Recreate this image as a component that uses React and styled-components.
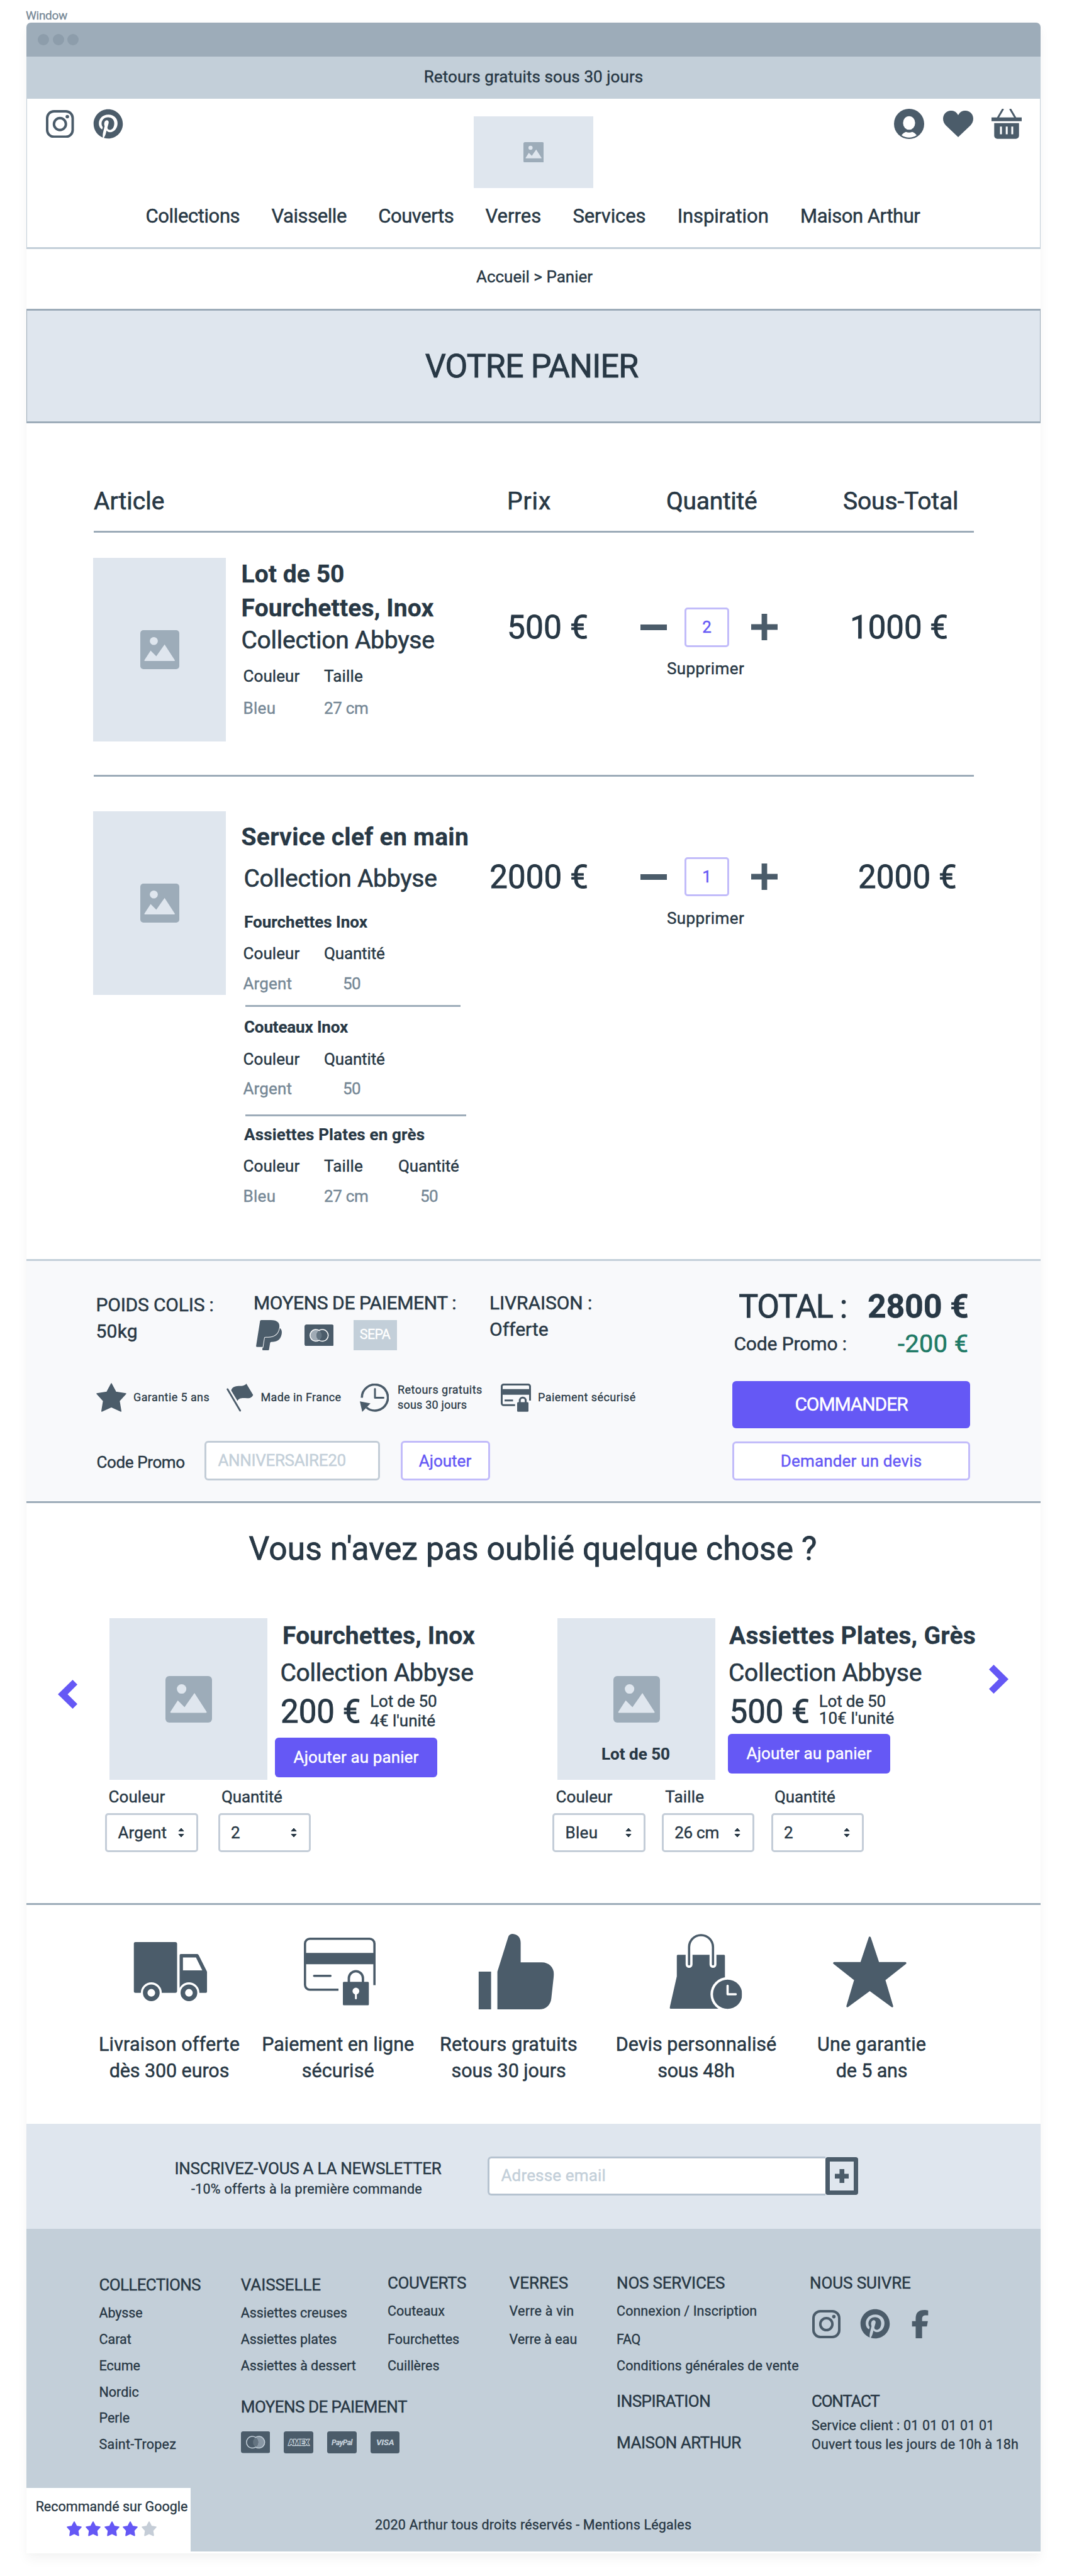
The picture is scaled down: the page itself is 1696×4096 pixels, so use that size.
import React from "react";
import styled, { createGlobalStyle, css } from "styled-components";
import { FaPinterest, FaFacebookF } from "react-icons/fa6";

const c = {
  ink: "#283845",
  icon: "#4b5c6a",
  muted: "#768896",
  steel: "#9dacb9",
  mist: "#c3cfd9",
  cloud: "#dfe6ee",
  pale: "#f8f9fb",
  violet: "#6558f5",
  lilac: "#c2bcfa",
  green: "#1f7a66",
};

const GlobalStyle = createGlobalStyle`
  *, *::before, *::after { box-sizing: border-box; }
  body {
    margin: 0;
    background: #ffffff;
    color: ${c.ink};
    font-family: Roboto, "Liberation Sans", sans-serif;
    font-weight: 400;
  }
  svg { display: block; flex: none; }
`;

/* ---------- text ---------- */

const Text = styled.div`
  font-size: ${(p) => p.$size || 26}px;
  line-height: ${(p) => p.$lh || 30}px;
  letter-spacing: ${(p) => p.$ls || 0}px;
  color: ${(p) => p.$color || "inherit"};
  -webkit-text-stroke: 0.016em currentColor;
  white-space: nowrap;
`;
const Strong = styled(Text)`
  font-weight: 700;
  -webkit-text-stroke: 0.008em currentColor;
`;

/* ---------- icons ---------- */

const Instagram = ({ size = 45 }) => (
  <svg width={size} height={size} viewBox="0 0 45 45" fill="none" stroke={c.icon} strokeWidth="4">
    <rect x="2" y="2" width="41" height="41" rx="11" />
    <circle cx="22.5" cy="22.5" r="9.6" />
    <circle cx="34.4" cy="10.6" r="2.8" fill={c.icon} stroke="none" />
  </svg>
);
const User = () => (
  <svg width="48" height="48" viewBox="0 0 48 48">
    <circle cx="24" cy="24" r="24" fill={c.icon} />
    <ellipse cx="24" cy="22.5" rx="9.6" ry="10.8" fill="#fff" />
    <path d="M12 42c2.500-2.600 4.500-4.700 7-5.200 3 1.200 7 1.200 10 0 2.500.5 4.500 2.600 7 5.200-7 5-17 5-24 0z" fill="#fff" />
  </svg>
);
const Heart = () => (
  <svg width="48" height="42" viewBox="0 0 48 42">
    <path
      d="M24 42 4.500 23.500C-.5 18.500-1.500 10.500 2.500 5 7-1.300 16.500-1.600 21.500 3.500L24 7l2.500-3.500C31.500-1.600 41-1.300 45.500 5c4 5.500 3 13.500-2 18.500z"
      fill={c.icon}
    />
  </svg>
);
const Basket = () => (
  <svg width="48" height="48" viewBox="0 0 48 48" fill={c.icon}>
    <path d="M18.500 0 10 14.500M29.500 0 38 14.500" stroke={c.icon} strokeWidth="3" />
    <rect y="13.700" width="48" height="6" />
    <path d="M4.300 22.800h39.400v20a5 5 0 0 1-5 5H9.300a5 5 0 0 1-5-5z" />
    <path d="M15 28.200v12.400M24.200 28.200v12.400M33 28.200v12.400" stroke="#fff" strokeWidth="3" />
  </svg>
);
const Picture = ({ size }) => (
  <svg width={size} height={size} viewBox="0 0 100 100">
    <rect width="100" height="100" rx="8" fill={c.steel} />
    <g fill={c.cloud}>
      <circle cx="34.700" cy="27.800" r="10.200" />
      <path d="M10.500 77 26.500 52.500 41 66.800 62.300 36.500 88.500 77q.5 2-1.500 2H12q-2 0-1.500-2z" />
    </g>
  </svg>
);
const Paypal = () => (
  <svg width="41" height="48" viewBox="1.800 0 20.400 24" preserveAspectRatio="none" fill={c.icon}>
    <path d="M7.076 21.337H2.470a.641.641 0 0 1-.633-.740L4.944.901C5.026.382 5.474 0 5.998 0h7.460c2.570 0 4.578.543 5.690 1.810 1.010 1.150 1.304 2.420 1.012 4.287-.023.143-.047.288-.077.437-.983 5.050-4.349 6.797-8.647 6.797h-2.190c-.524 0-.968.382-1.050.9l-1.120 7.106zm14.146-14.420a3.350 3.350 0 0 0-.607-.541c-.013.076-.026.175-.041.254-.930 4.778-4.005 7.201-9.138 7.201h-2.190a.563.563 0 0 0-.556.479l-1.187 7.527h-.506l-.240 1.516a.560.560 0 0 0 .554.647h3.882c.460 0 .850-.334.922-.788.060-.260.760-4.852.816-5.090a.932.932 0 0 1 .923-.788h.580c3.760 0 6.705-1.528 7.565-5.946.360-1.847.174-3.388-.777-4.471z" />
  </svg>
);
const Mastercard = ({ line = "#fff", flip }) => (
  <svg width="46.500" height="34.500" viewBox="0 0 46.500 34.500">
    <rect width="46.500" height="34.500" rx="3.500" fill={c.icon} />
    <circle cx={flip ? 28.400 : 18.100} cy="17.300" r="9.300" fill={flip ? "#8897a4" : "#a0abb5"} />
    <circle cx={flip ? 18.100 : 28.400} cy="17.300" r="9.300" fill={c.icon} />
    <path d="M23.250 9.560a9.300 9.300 0 0 1 0 15.480 9.300 9.300 0 0 1 0-15.480z" fill="#647481" />
    <path
      d="M23.250 9.560a9.300 9.300 0 1 0 0 15.480 9.300 9.300 0 1 0 0-15.480z"
      fill="none"
      stroke={line}
      strokeWidth="1.500"
    />
  </svg>
);
const SmallStar = () => (
  <svg width="48" height="46" viewBox="0 0 48 46">
    <path
      d="M24 1 31.200 14.600 47 17 36.600 28.600 39.300 45 24 38 8.700 45 11.400 28.600 1 17 16.800 14.600z"
      fill={c.icon}
      stroke={c.icon}
      strokeWidth="1.500"
      strokeLinejoin="round"
    />
  </svg>
);
const Flag = () => (
  <svg width="43" height="45" viewBox="0 0 43 45">
    <path d="M1.700 9 21.700 43" stroke={c.icon} strokeWidth="2.800" strokeLinecap="round" />
    <path d="M7.500 11C8.500 6.500 12 4.500 17 4c7-.5 11.500.300 14.500-4l10.800 18c-1.500 4-5 5.500-9.300 5.300-6.500-.3-13-1.300-15.500 4.200z" fill={c.icon} />
  </svg>
);
const History = () => (
  <svg width="46.500" height="45" viewBox="0 0 46.500 45" fill="none" stroke={c.icon}>
    <path d="M3.200 22.400A20.700 20.700 0 1 1 10.500 38" strokeWidth="3.600" />
    <path d="M24 8.500v14h13.500" strokeWidth="3" strokeLinecap="round" strokeLinejoin="round" />
    <path d="M0 28.300 16.800 31.500 3.800 45z" fill={c.icon} stroke="none" />
  </svg>
);
const SmallCardLock = () => (
  <svg width="48" height="45" viewBox="0 0 48 45" fill="none" stroke={c.icon}>
    <path d="M22.700 34.300H4.500a3 3 0 0 1-3-3V4.500a3 3 0 0 1 3-3h39a3 3 0 0 1 3 3V27" strokeWidth="3" />
    <path d="M0 13.300h48" strokeWidth="9" />
    <path d="M6 26.800h13.500" strokeWidth="3" />
    <path d="M30.200 30v-3a4.700 4.700 0 0 1 9.400 0v3" strokeWidth="3" />
    <rect x="26" y="29.600" width="18" height="15.200" rx="1.500" fill={c.icon} stroke="none" />
  </svg>
);
const Truck = () => (
  <svg width="117" height="94" viewBox="0 0 117 94" fill={c.icon}>
    <rect width="69" height="80.700" rx="3" />
    <path
      fillRule="evenodd"
      d="M75 19h26q1.500 0 2.200 1.500L116 46q.6 1 .6 2v30.700q0 2-2 2H75q-2 0-2-2V21q0-2 2-2zM78.300 24.600V45H109L99 24.600z"
    />
    <circle cx="28" cy="80.700" r="16.700" fill="#fff" />
    <circle cx="87.800" cy="80.700" r="16.700" fill="#fff" />
    <circle cx="28" cy="80.700" r="9.700" fill="none" stroke={c.icon} strokeWidth="7.200" />
    <circle cx="87.800" cy="80.700" r="9.700" fill="none" stroke={c.icon} strokeWidth="7.200" />
  </svg>
);
const CardLock = () => (
  <svg width="114" height="107.500" viewBox="0 0 114 107.500" fill="none" stroke={c.icon}>
    <path d="M55 82.800H9.500a7.700 7.700 0 0 1-7.700-7.700V9.500a7.700 7.700 0 0 1 7.700-7.700h95a7.700 7.700 0 0 1 7.700 7.700v66" strokeWidth="3.600" />
    <path d="M1.800 33.200h110.400" strokeWidth="18" />
    <path d="M16.300 60.800h26" strokeWidth="3.600" strokeLinecap="round" />
    <path d="M71.500 71v-6.500a11.200 11.200 0 0 1 22.400 0V71" strokeWidth="3.800" />
    <rect x="62" y="70.200" width="41.300" height="37.300" rx="1.500" fill={c.icon} stroke="none" />
    <circle cx="82.700" cy="85" r="5.400" fill="#fff" stroke="none" />
    <path d="M82.700 86v10.500" stroke="#fff" strokeWidth="3" strokeLinecap="round" />
  </svg>
);
const Thumb = () => (
  <svg width="120" height="120" viewBox="0 0 120 120" fill={c.icon}>
    <rect y="60" width="20" height="60" />
    <path d="M30 60 47.200 5C48.200 1.500 51 0 54.300 0 62 .4 67 5.800 67 14v31.200h33.500c12 0 20.500 9 19.200 21l-4 36.500c-1.200 11-9 17.300-19.200 17.300H30z" />
  </svg>
);
const BagClock = () => (
  <svg width="115.500" height="119.500" viewBox="0 0 115.500 119.500">
    <path d="M13 33.300h73.500q1.500 0 1.500 1.500V119H1.500Q0 119 .2 117.300L11.500 67.500V34.800q0-1.500 1.500-1.500z" fill={c.icon} />
    <path d="M31 30v18.500M69 30v18.500" stroke="#fff" strokeWidth="11" strokeLinecap="round" />
    <path d="M31 48.500V21a19 19 0 0 1 38 0v27.500" fill="none" stroke={c.icon} strokeWidth="3.600" strokeLinecap="round" />
    <circle cx="92.200" cy="96" r="27.200" fill="#fff" />
    <circle cx="92.200" cy="96" r="23.200" fill={c.icon} />
    <path d="M92.200 82.500V96h13" fill="none" stroke="#fff" strokeWidth="3.600" strokeLinecap="round" strokeLinejoin="round" />
  </svg>
);
const BigStar = () => (
  <svg width="117" height="113" viewBox="0 0 117 113">
    <path
      d="M58.500 2 72 42.500H115L81.500 69 94 111 58.500 85 23 111 35.500 69 2 42.500H45z"
      fill={c.icon}
      stroke={c.icon}
      strokeWidth="3.400"
      strokeLinejoin="round"
    />
  </svg>
);
const Plus = ({ size, weight }) => (
  <svg width={size} height={size} viewBox={`0 0 ${size} ${size}`} stroke={c.icon} strokeWidth={weight}>
    <path d={`M0 ${size / 2}H${size}M${size / 2} 0V${size}`} />
  </svg>
);
const Minus = () => (
  <svg width="42" height="9" viewBox="0 0 42 9">
    <rect width="42" height="9" fill={c.icon} />
  </svg>
);
const Chevron = ({ right }) => (
  <svg width="31" height="46" viewBox="0 0 31 46" fill={c.violet}>
    <path d={right ? "M7.500 0 31 23 7.500 46 0 38.400 15.500 23 0 7.600z" : "M23.500 0 0 23 23.500 46 31 38.400 15.500 23 31 7.600z"} />
  </svg>
);
const Sort = () => (
  <svg width="10" height="16" viewBox="0 0 10 16" fill={c.ink} stroke={c.ink} strokeLinejoin="round">
    <path d="M5 1 9 5.500H1zM5 15 9 10.500H1z" />
  </svg>
);
const RatingStar = ({ on }) => (
  <svg width="24" height="24" viewBox="0 0 24 24">
    <path
      d="M12 1.200 15.500 8 22.800 9.200 17.700 14.800 18.800 22.500 12 19.300 5.200 22.500 6.300 14.800 1.200 9.200 8.500 8z"
      fill={on ? c.violet : "#c5cdd7"}
      stroke={on ? c.violet : "#c5cdd7"}
      strokeWidth="2"
      strokeLinejoin="round"
    />
  </svg>
);

/* ---------- window ---------- */

const Page = styled.div`
  width: 1696px;
  height: 4096px;
  overflow: hidden;
  padding: 12px 42px 0;
`;
const WindowName = styled(Text)`
  margin-left: -1px;
  height: 24px;
`;
const Window = styled.div`
  width: 1612px;
  height: 4024px;
  border-radius: 7px 7px 0 0;
  background: #fff;
  box-shadow: 0 10px 18px rgba(0, 0, 0, 0.045), 0 0 8px rgba(0, 0, 0, 0.02);
`;
const TitleBar = styled.div`
  display: flex;
  align-items: center;
  gap: 5.700px;
  height: 54px;
  padding-left: 18px;
  border-radius: 7px 7px 0 0;
  background: ${c.steel};
`;
const Dot = styled.span`
  width: 18px;
  height: 18px;
  border-radius: 50%;
  background: #8d9dab;
`;
const Announcement = styled.div`
  display: flex;
  align-items: center;
  justify-content: center;
  height: 67px;
  padding-bottom: 3px;
  background: ${c.mist};
`;

/* ---------- header ---------- */

const Header = styled.header`
  height: 238.500px;
  padding: 16px 29px 0 30px;
  border: 1px solid ${c.mist};
  border-width: 0 1px 3px;
`;
const HeaderTop = styled.div`
  display: grid;
  grid-template-columns: 680px 190px 1fr;
  height: 126px;
`;
const IconGroup = styled.div`
  display: flex;
  align-items: center;
  justify-content: ${(p) => (p.$end ? "flex-end" : "flex-start")};
  gap: ${(p) => p.$gap}px;
  height: 48px;
`;
const ImageBox = styled.div`
  position: relative;
  display: flex;
  flex: none;
  align-items: center;
  justify-content: center;
  width: ${(p) => p.$w}px;
  height: ${(p) => p.$h}px;
  background: ${c.cloud};
`;
const Logo = styled(ImageBox)`
  margin-top: 12px;
`;
const Nav = styled.nav`
  display: flex;
  justify-content: center;
  gap: 50.300px;
  margin: 27px 3px 0 0;
`;
const Breadcrumb = styled.div`
  display: flex;
  align-items: center;
  justify-content: center;
  height: 95.500px;
  padding: 0 0 7px 3px;
`;
const Banner = styled.div`
  display: flex;
  align-items: center;
  justify-content: center;
  height: 182px;
  padding: 2px 6px 0 0;
  border: 1px solid ${c.steel};
  border-width: 3px 1px;
  background: ${c.cloud};
`;

/* ---------- cart ---------- */

const Cart = styled.section`
  width: 1400px;
  margin-left: 106px;
`;
const CartHead = styled.div`
  display: grid;
  grid-template-columns: 657px 253px 281px 1fr;
  height: 173.500px;
  margin-left: 1px;
  padding-top: 101px;
  border-bottom: 3px solid ${c.steel};
`;
const CartRow = styled.div`
  display: grid;
  grid-template-columns: 211px 23px 393px 160px 83px 218px 1fr;
  align-items: start;
  height: ${(p) => p.$h}px;
  padding-top: ${(p) => p.$top}px;
`;
const RowRule = styled.div`
  height: 3px;
  margin-left: 1px;
  background: ${c.steel};
`;
const Info = styled.div`
  grid-column: 3;
  padding: ${(p) => p.$top || 0}px 0 0 1.500px;
`;
const Price = styled(Text)`
  grid-column: 4;
  margin-top: ${(p) => p.$offset}px;
  text-align: right;
`;
const Quantity = styled.div`
  grid-column: 6;
  margin-top: ${(p) => p.$offset}px;
`;
const SubTotal = styled(Text)`
  grid-column: 7;
  margin: ${(p) => p.$offset}px 0 0 ${(p) => p.$indent}px;
`;
const Stepper = styled.div`
  display: flex;
  align-items: center;
`;
const StepValue = styled.div`
  display: flex;
  align-items: center;
  justify-content: center;
  width: 71px;
  height: 62.500px;
  margin: 0 35px 0 28px;
  border: 3px solid ${c.lilac};
  border-radius: 5px;
`;
const Remove = styled(Text)`
  margin: 19.500px 0 0 42px;
`;
const Collection = styled(Text)`
  margin: ${(p) => p.$mt || 0}px 0 0 ${(p) => p.$indent || 0}px;
`;
const Specs = styled.div`
  display: grid;
  grid-template-columns: 128.500px 118px auto;
  row-gap: ${(p) => p.$gap}px;
  margin: ${(p) => p.$mt}px 0 0 3px;
`;
const SpecValue = styled(Text)`
  padding-left: ${(p) => p.$indent || 0}px;
  color: ${c.muted};
`;
const PartName = styled(Strong)`
  margin: ${(p) => p.$mt}px 0 0 4.500px;
`;
const PartRule = styled.div`
  width: ${(p) => p.$w}px;
  height: 3px;
  margin: ${(p) => p.$mt}px 0 0 6.500px;
  background: ${c.steel};
`;

/* ---------- summary ---------- */

const Summary = styled.section`
  display: flex;
  height: 388.200px;
  padding: 41px 0 0 110.500px;
  border-top: 3px solid ${c.mist};
  border-bottom: 3px solid ${c.steel};
  background: ${c.pale};
`;
const SummaryMain = styled.div`
  width: 1011.500px;
  padding-top: 5px;
`;
const Facts = styled.div`
  display: grid;
  grid-template-columns: 250.500px 375px auto;
  height: 96px;
`;
const Fact = styled.div`
  padding-top: ${(p) => p.$drop || 0}px;
`;
const PayIcons = styled.div`
  display: flex;
  align-items: center;
  margin: 6.400px 0 0 4px;
`;
const CardSlot = styled.div`
  margin: 0 31.500px 0 35.500px;
`;
const Sepa = styled.div`
  display: flex;
  align-items: center;
  justify-content: center;
  width: 69px;
  height: 48px;
  padding-bottom: 3px;
  background: ${c.mist};
`;
const Badges = styled.div`
  display: grid;
  grid-template-columns: 207.500px 211.500px 224px auto;
  align-items: center;
  height: 46px;
  margin: 51.400px 0 0;
`;
const Badge = styled.div`
  display: flex;
  align-items: center;
  gap: ${(p) => p.$gap || 11.5}px;
`;
const PromoForm = styled.div`
  display: flex;
  align-items: center;
  height: 62.600px;
  margin-top: 47.400px;
`;
const PromoLabel = styled(Text)`
  width: 172px;
  padding: 5px 0 0 1px;
`;
const Field = styled.div`
  display: flex;
  align-items: center;
  width: ${(p) => p.$w}px;
  height: 62.600px;
  padding: 0 0 1px ${(p) => p.$pad}px;
  border: 3px solid ${(p) => p.$line};
  border-radius: 6px;
  background: #fff;
`;
const Button = styled.button`
  display: flex;
  align-items: center;
  justify-content: center;
  width: ${(p) => p.$w}px;
  height: ${(p) => p.$h || 62.600}px;
  margin: ${(p) => p.$mt || 0}px 0 0 ${(p) => p.$ml || 0}px;
  padding: 0;
  border: 0;
  border-radius: 6px;
  background: ${c.violet};
  color: #fff;
  font-family: inherit;
  ${(p) =>
    p.$outline &&
    css`
      border: 3px solid ${c.lilac};
      background: #fff;
      color: ${c.violet};
    `}
`;
const Checkout = styled.div`
  width: 378px;
`;
const Totals = styled.div`
  display: grid;
  grid-template-columns: 182px 1fr;
  justify-items: end;
  row-gap: 8px;
  padding: 1.500px 2.500px 0 0;
`;

/* ---------- suggestions ---------- */

const Suggestions = styled.section`
  height: 638.700px;
  padding-top: 42px;
  border-bottom: 3px solid ${c.steel};
`;
const SuggestTitle = styled(Text)`
  padding-right: 2px;
  text-align: center;
`;
const Carousel = styled.div`
  display: flex;
  align-items: flex-start;
  margin-top: 79.500px;
`;
const ArrowButton = styled.div`
  margin: ${(p) => p.$mt}px 0 0 ${(p) => p.$ml}px;
`;
const Product = styled.article`
  width: ${(p) => p.$w}px;
  margin-left: ${(p) => p.$ml || 0}px;
`;
const ProductTop = styled.div`
  display: flex;
  gap: ${(p) => p.$gap}px;
  height: 257px;
  padding-left: ${(p) => p.$pad}px;
`;
const Caption = styled(Strong)`
  position: absolute;
  right: 2px;
  bottom: 26.500px;
  left: 0;
  text-align: center;
`;
const ProductInfo = styled.div`
  padding-top: 3.500px;
`;
const ProductName = styled(Strong)`
  padding-left: ${(p) => p.$pad}px;
`;
const PriceRow = styled.div`
  display: flex;
  align-items: center;
  gap: 15px;
  height: 60px;
  margin-top: 8.300px;
  padding-left: ${(p) => p.$pad}px;
`;
const UnitNote = styled.div`
  padding-bottom: ${(p) => p.$lift}px;
`;
const Options = styled.div`
  display: flex;
  gap: ${(p) => p.$gap}px;
  margin-top: 11.500px;
`;
const OptionLabel = styled(Text)`
  padding-left: 5.500px;
`;
const Select = styled.div`
  display: flex;
  align-items: center;
  justify-content: space-between;
  width: 147.500px;
  height: 62.500px;
  margin-top: 10.700px;
  padding: 0 19px 0 17.500px;
  border: 3px solid #c4cdd8;
  border-radius: 5px;
`;

/* ---------- benefits ---------- */

const Benefits = styled.section`
  display: grid;
  grid-template-columns: 268px 268.400px 274.400px 321.400px 236.800px;
  height: 348px;
  padding: 46px 0 0 93px;
`;
const Benefit = styled.div`
  display: flex;
  flex-direction: column;
  align-items: center;
`;
const BenefitIcon = styled.div`
  display: flex;
  align-items: center;
  height: 121px;
  margin-bottom: 34.500px;
  transform: translateX(${(p) => p.$shift}px);
`;

/* ---------- newsletter ---------- */

const Newsletter = styled.section`
  display: flex;
  height: 167.200px;
  padding: 52px 0 0 235px;
  background: ${c.cloud};
`;
const NewsText = styled.div`
  display: flex;
  flex-direction: column;
  align-items: center;
  width: 425px;
  margin-right: 73px;
  padding-top: 2px;
`;
const NewsOffer = styled(Text)`
  margin-right: 4px;
`;
const EmailField = styled(Field)`
  border-right: 0;
  border-radius: 6px 0 0 6px;
`;
const AddButton = styled.div`
  display: flex;
  align-items: center;
  justify-content: center;
  width: 52px;
  height: 60px;
  margin-top: 1.500px;
  border: 7.300px solid ${c.icon};
  border-radius: 4px;
`;

/* ---------- footer ---------- */

const Footer = styled.footer`
  height: 513.400px;
  background: ${c.mist};
`;
const FooterMain = styled.div`
  display: grid;
  grid-template-columns: 225.300px 233.300px 193.500px 170.500px 307px auto;
  height: 412px;
  padding: 74px 0 0 115.500px;
`;
const FooterColumn = styled.div`
  margin-top: ${(p) => (p.$raised ? -3 : 0)}px;
`;
const LinkList = styled.div`
  margin-top: 9.300px;
  > :first-child {
    margin-bottom: ${(p) => (p.$raised ? 2.800 : 0)}px;
  }
`;
const FooterTitle = styled(Text)`
  margin: ${(p) => p.$mt || 0}px 0 0 ${(p) => p.$ml || 0}px;
`;
const PaymentCards = styled.div`
  display: flex;
  gap: 22.200px;
  width: 253px;
  margin-top: 24.500px;
`;
const BrandCard = styled.div`
  display: flex;
  flex: none;
  align-items: center;
  justify-content: center;
  width: 46.500px;
  height: 34.500px;
  border-radius: 3.500px;
  background: ${c.icon};
  color: ${c.mist};
  font-size: ${(p) => p.$size}px;
  font-weight: 800;
  font-style: ${(p) => (p.$outlined ? "normal" : "italic")};
  line-height: 1;
  letter-spacing: ${(p) => p.$ls}px;
  ${(p) =>
    p.$outlined &&
    css`
      color: ${c.icon};
      -webkit-text-stroke: 2.400px ${c.mist};
      paint-order: stroke fill;
    `}
`;
const Social = styled.div`
  display: flex;
  align-items: center;
  height: 48px;
  margin: 26.500px 0 0 4px;
`;
const SocialLink = styled.div`
  margin-left: ${(p) => p.$ml || 0}px;
`;
const Contact = styled.div`
  margin: 83.500px 0 0 3px;
`;
const ContactLines = styled.div`
  margin-top: 9px;
`;
const FooterBottom = styled.div`
  display: flex;
  height: 101.400px;
`;
const Rating = styled.div`
  display: flex;
  flex-direction: column;
  align-items: center;
  width: 261px;
  padding: 17.500px 0 0 10px;
  background: #fff;
`;
const Stars = styled.div`
  display: flex;
  gap: 5.800px;
  margin-top: 10.500px;
`;
const Copyright = styled(Text)`
  margin: 44.500px 0 0 293px;
`;

/* ---------- data ---------- */

const navItems = [
  ["Collections", -0.4],
  ["Vaisselle", -0.45],
  ["Couverts", -0.45],
  ["Verres", 0],
  ["Services", -0.12],
  ["Inspiration", -0.06],
  ["Maison Arthur", -0.45],
];
const benefits = [
  [Truck, 1.500, ["Livraison offerte", 0.14], ["dès 300 euros", -0.09]],
  [CardLock, 3, ["Paiement en ligne", 0], ["sécurisé", 0.09]],
  [Thumb, 11.600, ["Retours gratuits", 0.19], ["sous 30 jours", -0.03]],
  [BagClock, 15.300, ["Devis personnalisé", 0.02], ["sous 48h", -0.22]],
  [BigStar, -3, ["Une garantie", 0.21], ["de 5 ans", -0.15]],
];

const Links = ({ items, raised }) => (
  <LinkList $raised={raised}>
    {items.map(([label, ls]) => (
      <Text key={label} $size={21.5} $lh={41.85} $ls={ls}>
        {label}
      </Text>
    ))}
  </LinkList>
);
const QuantityPicker = ({ value, offset }) => (
  <Quantity $offset={offset}>
    <Stepper>
      <Minus />
      <StepValue>
        <Text $color={c.violet}>{value}</Text>
      </StepValue>
      <Plus size={42} weight={8.8} />
    </Stepper>
    <Remove $ls={0.41}>Supprimer</Remove>
  </Quantity>
);
const Option = ({ label, ls, value, valueLs }) => (
  <div>
    <OptionLabel $ls={ls}>{label}</OptionLabel>
    <Select>
      <Text $ls={valueLs}>{value}</Text>
      <Sort />
    </Select>
  </div>
);
const SilverSpecs = ({ gap, mt }) => (
  <Specs $gap={gap} $mt={mt}>
    <Text $ls={0.08}>Couleur</Text>
    <Text $ls={-0.15}>Quantité</Text>
    <span />
    <SpecValue $ls={0.14}>Argent</SpecValue>
    <SpecValue $ls={-0.6} $indent={30}>50</SpecValue>
  </Specs>
);

export default function App() {
  return (
    <>
      <GlobalStyle />
      <Page>
        <WindowName $size={19} $lh={25} $ls={-0.3} $color={c.muted}>Window</WindowName>
        <Window>
          <TitleBar>
            <Dot />
            <Dot />
            <Dot />
          </TitleBar>
          <Announcement>
            <Text $ls={0.08}>Retours gratuits sous 30 jours</Text>
          </Announcement>

          <Header>
            <HeaderTop>
              <IconGroup $gap={30}>
                <Instagram size={44.5} />
                <FaPinterest size={48} color={c.icon} />
              </IconGroup>
              <Logo $w={190} $h={114}>
                <Picture size={32.5} />
              </Logo>
              <IconGroup $end $gap={29.5}>
                <User />
                <Heart />
                <Basket />
              </IconGroup>
            </HeaderTop>
            <Nav>
              {navItems.map(([label, ls]) => (
                <Text key={label} $size={31} $lh={36} $ls={ls}>
                  {label}
                </Text>
              ))}
            </Nav>
          </Header>

          <Breadcrumb>
            <Text>Accueil &gt; Panier</Text>
          </Breadcrumb>
          <Banner>
            <Text $size={52} $lh={60} $ls={-0.9}>VOTRE PANIER</Text>
          </Banner>

          <Cart>
            <CartHead>
              <Text $size={39} $lh={47}>Article</Text>
              <Text $size={39} $lh={47} $ls={0.9}>Prix</Text>
              <Text $size={39} $lh={47} $ls={-0.3}>Quantité</Text>
              <Text $size={39} $lh={47} $ls={-0.16}>Sous-Total</Text>
            </CartHead>

            <CartRow $h={385} $top={40.5}>
              <ImageBox $w={211} $h={292}>
                <Picture size={62} />
              </ImageBox>
              <Info>
                <Strong $size={39} $lh={53.7} $ls={0.06}>Lot de 50</Strong>
                <Strong $size={39} $lh={53.7} $ls={0.15}>Fourchettes, Inox</Strong>
                <Collection $size={39} $lh={48} $ls={-0.27}>Collection Abbyse</Collection>
                <Specs $gap={20.3} $mt={18}>
                  <Text $ls={0.08}>Couleur</Text>
                  <Text $ls={0.16}>Taille</Text>
                  <span />
                  <SpecValue $ls={0.3}>Bleu</SpecValue>
                  <SpecValue $ls={-0.3}>27 cm</SpecValue>
                </Specs>
              </Info>
              <Price $size={51.5} $lh={62.4} $offset={79.5} $ls={0.1}>500 €</Price>
              <QuantityPicker value="2" offset={79} />
              <SubTotal $size={51} $lh={62.4} $offset={79.5} $indent={115}>1000 €</SubTotal>
            </CartRow>
            <RowRule />

            <CartRow $h={767.2} $top={55.2}>
              <ImageBox $w={211} $h={292}>
                <Picture size={62} />
              </ImageBox>
              <Info $top={17.7}>
                <Strong $size={39} $lh={48} $ls={0.3}>Service clef en main</Strong>
                <Collection $size={39} $lh={48} $ls={-0.27} $mt={18} $indent={4}>Collection Abbyse</Collection>
                <PartName $mt={30}>Fourchettes Inox</PartName>
                <SilverSpecs gap={17.4} mt={20.1} />
                <PartRule $w={341.5} $mt={19.6} />
                <PartName $mt={16.8} $ls={-0.15}>Couteaux Inox</PartName>
                <SilverSpecs gap={17.2} mt={20.6} />
                <PartRule $w={351} $mt={25.7} />
                <PartName $mt={14.2} $ls={0.16}>Assiettes Plates en grès</PartName>
                <Specs $gap={17.6} $mt={20.3}>
                  <Text $ls={0.08}>Couleur</Text>
                  <Text $ls={0.16}>Taille</Text>
                  <Text $ls={-0.15}>Quantité</Text>
                  <SpecValue $ls={0.3}>Bleu</SpecValue>
                  <SpecValue $ls={-0.3}>27 cm</SpecValue>
                  <SpecValue $ls={-0.6} $indent={35}>50</SpecValue>
                </Specs>
              </Info>
              <Price $size={51} $lh={62.4} $offset={74} $ls={0.14}>2000 €</Price>
              <QuantityPicker value="1" offset={73.2} />
              <SubTotal $size={51} $lh={62.4} $offset={74} $ls={0.14} $indent={128}>2000 €</SubTotal>
            </CartRow>
          </Cart>

          <Summary>
            <SummaryMain>
              <Facts>
                <Fact $drop={3}>
                  <Text $size={30} $lh={42} $ls={-0.2}>POIDS COLIS :</Text>
                  <Text $size={30} $lh={42} $ls={0.22}>50kg</Text>
                </Fact>
                <Fact>
                  <Text $size={30} $lh={42} $ls={-0.4}>MOYENS DE PAIEMENT :</Text>
                  <PayIcons>
                    <Paypal />
                    <CardSlot>
                      <Mastercard />
                    </CardSlot>
                    <Sepa>
                      <Text $size={21.5} $ls={-0.7} $color="#fff">SEPA</Text>
                    </Sepa>
                  </PayIcons>
                </Fact>
                <Fact>
                  <Text $size={30} $lh={42} $ls={-0.1}>LIVRAISON :</Text>
                  <Text $size={30} $lh={42}>Offerte</Text>
                </Fact>
              </Facts>
              <Badges>
                <Badge>
                  <SmallStar />
                  <Text $size={18} $ls={0.41}>Garantie 5 ans</Text>
                </Badge>
                <Badge>
                  <Flag />
                  <Text $size={18} $ls={0.38}>Made in France</Text>
                </Badge>
                <Badge $gap={14}>
                  <History />
                  <div>
                    <Text $size={18} $lh={24.3} $ls={0.46}>Retours gratuits</Text>
                    <Text $size={18} $lh={24.3} $ls={0.19}>sous 30 jours</Text>
                  </div>
                </Badge>
                <Badge>
                  <SmallCardLock />
                  <Text $size={18} $ls={0.45}>Paiement sécurisé</Text>
                </Badge>
              </Badges>
              <PromoForm>
                <PromoLabel $ls={-0.39}>Code Promo</PromoLabel>
                <Field $w={279} $pad={19} $line="#c3cdd7">
                  <Text $ls={-0.34} $color={c.mist}>ANNIVERSAIRE20</Text>
                </Field>
                <Button $outline $w={142} $ml={33}>
                  <Text>Ajouter</Text>
                </Button>
              </PromoForm>
            </SummaryMain>
            <Checkout>
              <Totals>
                <Text $size={52} $lh={62} $ls={-1.46}>TOTAL :</Text>
                <Strong $size={52} $lh={62} $ls={-0.25}>2800 €</Strong>
                <Text $size={30} $lh={40} $ls={-0.11}>Code Promo :</Text>
                <Text $size={39.5} $lh={40} $ls={0.5} $color={c.green}>-200 €</Text>
              </Totals>
              <Button $w={378} $h={74.6} $mt={39}>
                <Text $size={30} $lh={36} $ls={-1.1}>COMMANDER</Text>
              </Button>
              <Button $outline $w={378} $mt={20.8}>
                <Text $ls={0.17}>Demander un devis</Text>
              </Button>
            </Checkout>
          </Summary>

          <Suggestions>
            <SuggestTitle $size={51.5} $lh={62} $ls={0.1}>Vous n'avez pas oublié quelque chose ?</SuggestTitle>
            <Carousel>
              <ArrowButton $mt={98} $ml={50}>
                <Chevron />
              </ArrowButton>
              <Product $w={667} $ml={44}>
                <ProductTop $gap={12} $pad={7}>
                  <ImageBox $w={251} $h={257}>
                    <Picture size={74} />
                  </ImageBox>
                  <ProductInfo>
                    <ProductName $size={39} $lh={48} $ls={0.15} $pad={12}>Fourchettes, Inox</ProductName>
                    <Collection $size={39} $lh={48} $ls={-0.27} $mt={11} $indent={8.5}>Collection Abbyse</Collection>
                    <PriceRow $pad={9}>
                      <Text $size={51} $lh={60}>200 €</Text>
                      <UnitNote $lift={3}>
                        <Text $lh={31} $ls={-0.2}>Lot de 50</Text>
                        <Text $lh={31}>4€ l'unité</Text>
                      </UnitNote>
                    </PriceRow>
                    <Button $w={258} $h={63} $mt={10.5}>
                      <Text $ls={0.12}>Ajouter au panier</Text>
                    </Button>
                  </ProductInfo>
                </ProductTop>
                <Options $gap={32}>
                  <Option label="Couleur" ls={0.08} value="Argent" valueLs={0.14} />
                  <Option label="Quantité" ls={-0.15} value="2" />
                </Options>
              </Product>
              <Product $w={672} $ml={44}>
                <ProductTop $gap={20} $pad={8}>
                  <ImageBox $w={251} $h={257}>
                    <Picture size={74} />
                    <Caption>Lot de 50</Caption>
                  </ImageBox>
                  <ProductInfo>
                    <ProductName $size={39} $lh={48} $ls={0.26} $pad={2}>Assiettes Plates, Grès</ProductName>
                    <Collection $size={39} $lh={48} $ls={-0.27} $mt={11} $indent={1}>Collection Abbyse</Collection>
                    <PriceRow $pad={2.5}>
                      <Text $size={51} $lh={60}>500 €</Text>
                      <UnitNote $lift={7}>
                        <Text $lh={27} $ls={-0.2}>Lot de 50</Text>
                        <Text $lh={27} $ls={0.1}>10€ l'unité</Text>
                      </UnitNote>
                    </PriceRow>
                    <Button $w={258} $h={63} $mt={4.5}>
                      <Text $ls={0.12}>Ajouter au panier</Text>
                    </Button>
                  </ProductInfo>
                </ProductTop>
                <Options $gap={26.3}>
                  <Option label="Couleur" ls={0.08} value="Bleu" valueLs={0.3} />
                  <Option label="Taille" ls={0.16} value="26 cm" valueLs={-0.3} />
                  <Option label="Quantité" ls={-0.15} value="2" />
                </Options>
              </Product>
              <ArrowButton $mt={74} $ml={21.5}>
                <Chevron right />
              </ArrowButton>
            </Carousel>
          </Suggestions>

          <Benefits>
            {benefits.map(([Icon, shift, first, second]) => (
              <Benefit key={first[0]}>
                <BenefitIcon $shift={shift}>
                  <Icon />
                </BenefitIcon>
                <Text $size={30.5} $lh={42} $ls={first[1]}>{first[0]}</Text>
                <Text $size={30.5} $lh={42} $ls={second[1]}>{second[0]}</Text>
              </Benefit>
            ))}
          </Benefits>

          <Newsletter>
            <NewsText>
              <Text $lh={34} $ls={-0.27}>INSCRIVEZ-VOUS A LA NEWSLETTER</Text>
              <NewsOffer $size={21.5} $lh={31.6} $ls={0.25}>-10% offerts à la première commande</NewsOffer>
            </NewsText>
            <EmailField $w={537} $pad={18.5} $line="#b6c3d0">
              <Text $ls={0.16} $color={c.mist}>Adresse email</Text>
            </EmailField>
            <AddButton>
              <Plus size={22.5} weight={7.6} />
            </AddButton>
          </Newsletter>

          <Footer>
            <FooterMain>
              <FooterColumn>
                <FooterTitle $ls={-0.66}>COLLECTIONS</FooterTitle>
                <Links
                  items={[["Abysse", -0.1], ["Carat", 0], ["Ecume", 0], ["Nordic", 0], ["Perle", 0], ["Saint-Tropez", 0.21]]}
                />
              </FooterColumn>
              <FooterColumn>
                <FooterTitle $ls={-0.1}>VAISSELLE</FooterTitle>
                <Links items={[["Assiettes creuses", -0.05], ["Assiettes plates", -0.05], ["Assiettes à dessert", -0.04]]} />
                <FooterTitle $ls={-0.54} $mt={29.3}>MOYENS DE PAIEMENT</FooterTitle>
                <PaymentCards>
                  <Mastercard flip line={c.mist} />
                  <BrandCard $outlined $size={12} $ls={-0.2}>AMEX</BrandCard>
                  <BrandCard $size={12} $ls={-0.6}>PayPal</BrandCard>
                  <BrandCard $size={13.5} $ls={-0.3}>VISA</BrandCard>
                </PaymentCards>
              </FooterColumn>
              <FooterColumn $raised>
                <FooterTitle $ls={-0.5}>COUVERTS</FooterTitle>
                <Links raised items={[["Couteaux", 0], ["Fourchettes", 0.02], ["Cuillères", 0]]} />
              </FooterColumn>
              <FooterColumn $raised>
                <FooterTitle>VERRES</FooterTitle>
                <Links raised items={[["Verre à vin", 0.23], ["Verre à eau", 0]]} />
              </FooterColumn>
              <FooterColumn $raised>
                <FooterTitle $ls={-0.24}>NOS SERVICES</FooterTitle>
                <Links
                  raised
                  items={[["Connexion / Inscription", 0.05], ["FAQ", -0.3], ["Conditions générales de vente", 0.07]]}
                />
                <FooterTitle $ls={-0.53} $mt={20.5}>INSPIRATION</FooterTitle>
                <FooterTitle $ls={-0.51} $mt={36}>MAISON ARTHUR</FooterTitle>
              </FooterColumn>
              <FooterColumn $raised>
                <FooterTitle $ls={-0.11}>NOUS SUIVRE</FooterTitle>
                <Social>
                  <Instagram />
                  <SocialLink $ml={31}>
                    <FaPinterest size={48} color={c.icon} />
                  </SocialLink>
                  <SocialLink $ml={24.5}>
                    <FaFacebookF size={45} color={c.icon} viewBox="-96 0 512 512" />
                  </SocialLink>
                </Social>
                <Contact>
                  <FooterTitle $ls={-1.3}>CONTACT</FooterTitle>
                  <ContactLines>
                    <Text $size={21.5} $ls={0.16}>Service client : 01 01 01 01 01</Text>
                    <Text $size={21.5} $ls={0.11}>Ouvert tous les jours de 10h à 18h</Text>
                  </ContactLines>
                </Contact>
              </FooterColumn>
            </FooterMain>
            <FooterBottom>
              <Rating>
                <Text $size={21.5} $lh={25}>Recommandé sur Google</Text>
                <Stars>
                  {[1, 2, 3, 4, 5].map((n) => (
                    <RatingStar key={n} on={n < 5} />
                  ))}
                </Stars>
              </Rating>
              <Copyright $size={21.5} $ls={0.19}>2020 Arthur tous droits réservés - Mentions Légales</Copyright>
            </FooterBottom>
          </Footer>
        </Window>
      </Page>
    </>
  );
}
